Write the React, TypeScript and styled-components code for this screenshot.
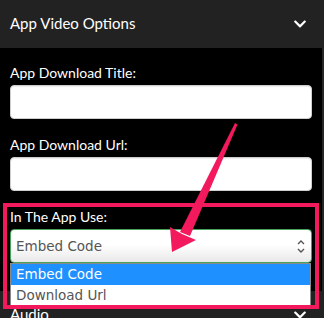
import React from 'react';
import styled, { createGlobalStyle } from 'styled-components';
import { FaChevronDown } from 'react-icons/fa';

const GlobalStyle = createGlobalStyle`
  html, body {
    margin: 0;
    padding: 0;
    background: #262626;
  }
  * {
    box-sizing: border-box;
  }
`;

const Page = styled.div`
  position: relative;
  width: 324px;
  height: 318px;
  overflow: hidden;
  background: #262626;
  font-family: Lato, "Open Sans", "Liberation Sans", sans-serif;
`;

const SectionHeader = styled.div`
  height: 48px;
  padding: 0 17px 0 10px;
  background: #222222;
  color: #ffffff;
  font-size: 15px;
  display: flex;
  align-items: center;
  justify-content: space-between;
`;

const HeaderTitle = styled.span`
  line-height: 20px;
  margin-top: -2px;
`;

const Chevron = styled(FaChevronDown)`
  width: 14px;
  height: 14px;
  margin-top: -1px;
`;

const Panel = styled.div`
  width: 322px;
  background: #000000;
  padding: 15px 10px 28px;
  display: flex;
  flex-direction: column;
  gap: 16px;
`;

const Field = styled.div`
  position: relative;
  display: flex;
  flex-direction: column;
  gap: 2px;
`;

const Label = styled.label`
  color: #ffffff;
  font-size: 14px;
  line-height: 20px;
`;

const TextBox = styled.div`
  height: 34px;
  width: 302px;
  background: #ffffff;
  border: 1px solid #cfcfcf;
  border-radius: 4px;
  box-shadow: inset 0 1px 1px rgba(0, 0, 0, 0.08);
`;

const SelectBox = styled.div`
  height: 34px;
  width: 302px;
  border: 1px solid #46a35a;
  border-radius: 4px;
  background: linear-gradient(#ffffff 0%, #ffffff 45%, #e9e9e9 100%);
  padding: 0 6px 0 5px;
  display: flex;
  align-items: center;
  justify-content: space-between;
  color: #555555;
  font-family: "DejaVu Sans", Verdana, sans-serif;
  font-size: 13.5px;
`;

const Spinner = styled.svg`
  width: 8px;
  height: 15px;
`;

const OptionList = styled.div`
  position: absolute;
  left: 0;
  top: 56px;
  width: 301px;
  background: #ffffff;
  border: 1px solid #8a8a8a;
  z-index: 2;
`;

const Option = styled.div<{ $selected?: boolean }>`
  height: 21px;
  padding-left: 5px;
  font-family: "DejaVu Sans", Verdana, sans-serif;
  font-size: 13.5px;
  line-height: 21px;
  color: ${p => (p.$selected ? '#ffffff' : '#555555')};
  background: ${p => (p.$selected ? '#1e90ff' : '#ffffff')};
`;

const Highlight = styled.div`
  position: absolute;
  left: 3px;
  top: 203px;
  width: 316px;
  height: 106px;
  border: 4px solid #f21a5d;
  z-index: 3;
  pointer-events: none;
`;

const ArrowLayer = styled.svg`
  position: absolute;
  left: 0;
  top: 0;
  width: 324px;
  height: 318px;
  z-index: 4;
  pointer-events: none;
`;

const App: React.FC = () => {
  return (
    <Page>
      <GlobalStyle />
      <SectionHeader>
        <HeaderTitle>App Video Options</HeaderTitle>
        <Chevron />
      </SectionHeader>

      <Panel>
        <Field>
          <Label>App Download Title:</Label>
          <TextBox />
        </Field>
        <Field>
          <Label>App Download Url:</Label>
          <TextBox />
        </Field>
        <Field>
          <Label>In The App Use:</Label>
          <SelectBox>
            <span>Embed Code</span>
            <Spinner viewBox="0 0 8 15">
              <path d="M1 5 L4 2 L7 5" fill="none" stroke="#555" strokeWidth="1.4" />
              <path d="M1 10 L4 13 L7 10" fill="none" stroke="#555" strokeWidth="1.4" />
            </Spinner>
          </SelectBox>
          <OptionList>
            <Option $selected>Embed Code</Option>
            <Option>Download Url</Option>
          </OptionList>
        </Field>
      </Panel>

      <SectionHeader>
        <HeaderTitle>Audio</HeaderTitle>
        <Chevron />
      </SectionHeader>

      <Highlight />
      <ArrowLayer viewBox="0 0 324 318">
        <polygon points="235,123 237.5,124.5 190,236 180,232" fill="#f21a5d" />
        <polygon points="172,252 170,227 182,234 196,240" fill="#f21a5d" />
      </ArrowLayer>
    </Page>
  );
};

export default App;
